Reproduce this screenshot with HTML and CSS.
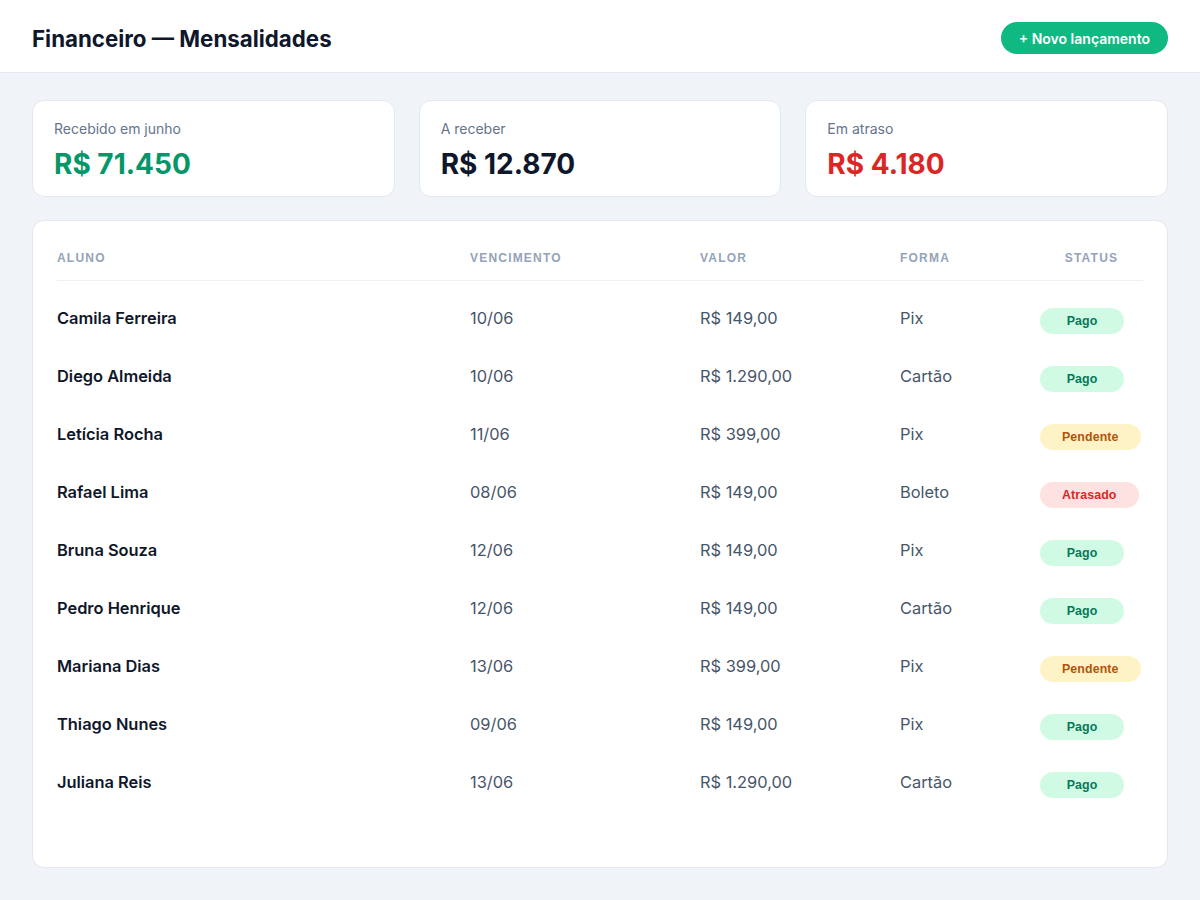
FILE: index.html
```html
<!DOCTYPE html>
<html lang="pt-BR">
<head>
  <meta charset="UTF-8" />
  <meta name="viewport" content="width=device-width, initial-scale=1.0"/>
  <title>Financeiro — Mensalidades</title>
  <link rel="stylesheet" href="styles.css">
</head>
<body>
  <header class="topbar">
    <h1>Financeiro — Mensalidades</h1>
    <button class="btn-new">+ Novo lançamento</button>
  </header>

  <main class="content">
    <section class="summary">
      <div class="card">
        <div class="card-label">Recebido em junho</div>
        <div class="card-value green">R$ 71.450</div>
      </div>
      <div class="card">
        <div class="card-label">A receber</div>
        <div class="card-value">R$ 12.870</div>
      </div>
      <div class="card">
        <div class="card-label">Em atraso</div>
        <div class="card-value red">R$ 4.180</div>
      </div>
    </section>

    <section class="panel">
      <div class="row head">
        <div>Aluno</div>
        <div>Vencimento</div>
        <div>Valor</div>
        <div>Forma</div>
        <div class="center">Status</div>
      </div>
      <div id="rows"></div>
    </section>
  </main>

  <script>
    const pagamentos = [
      ["Camila Ferreira", "10/06", "R$ 149,00", "Pix", "pago"],
      ["Diego Almeida", "10/06", "R$ 1.290,00", "Cartão", "pago"],
      ["Letícia Rocha", "11/06", "R$ 399,00", "Pix", "pendente"],
      ["Rafael Lima", "08/06", "R$ 149,00", "Boleto", "atrasado"],
      ["Bruna Souza", "12/06", "R$ 149,00", "Pix", "pago"],
      ["Pedro Henrique", "12/06", "R$ 149,00", "Cartão", "pago"],
      ["Mariana Dias", "13/06", "R$ 399,00", "Pix", "pendente"],
      ["Thiago Nunes", "09/06", "R$ 149,00", "Pix", "pago"],
      ["Juliana Reis", "13/06", "R$ 1.290,00", "Cartão", "pago"]
    ];

    const rotulos = { pago: "Pago", pendente: "Pendente", atrasado: "Atrasado" };

    document.getElementById("rows").innerHTML = pagamentos.map(([nome, venc, valor, forma, status]) => `
      <div class="row">
        <div class="name">${nome}</div>
        <div>${venc}</div>
        <div>${valor}</div>
        <div>${forma}</div>
        <div><span class="badge ${status}">${rotulos[status]}</span></div>
      </div>`).join("");
  </script>
</body>
</html>
```

FILE: styles.css
```css
:root {
  --bg-color: #f0f4f8;
  --text-color: #0f172a;
  --muted: #64748b;
  --line: #e2e8f0;
  --green: #059669;
  --red: #dc2626;
}

* {
  box-sizing: border-box;
}

body {
  margin: 0;
  height: 100vh;
  display: flex;
  flex-direction: column;
  background-color: var(--bg-color);
  color: var(--text-color);
  font-family: Inter, "Noto Sans", sans-serif;
}

.topbar {
  height: 73px;
  flex-shrink: 0;
  display: flex;
  align-items: center;
  justify-content: space-between;
  padding: 4px 32px 0;
  background: #ffffff;
  border-bottom: 1px solid var(--line);
}

.topbar h1 {
  margin: 0;
  font-size: 22.3px;
  font-weight: 700;
}

.btn-new {
  height: 32px;
  padding: 0 18px;
  border: none;
  border-radius: 16px;
  background-color: #10b981;
  color: #ffffff;
  font-family: Inter, sans-serif;
  font-size: 14px;
  font-weight: 600;
  cursor: pointer;
}

.content {
  flex: 1;
  display: flex;
  flex-direction: column;
  gap: 23px;
  padding: 27px 32px 32px;
}

.summary {
  display: grid;
  grid-template-columns: repeat(3, 1fr);
  gap: 24px;
}

.card {
  height: 97px;
  padding: 18px 21px 15px;
  background: #ffffff;
  border: 1px solid var(--line);
  border-radius: 12px;
}

.card-label {
  font-size: 14px;
  line-height: 20px;
  color: var(--muted);
}

.card-value {
  margin-top: 8px;
  font-size: 28px;
  line-height: 34px;
  font-weight: 700;
}

.card-value.green {
  color: var(--green);
}

.card-value.red {
  color: var(--red);
}

.panel {
  flex: 1;
  padding: 24px;
  background: #ffffff;
  border: 1px solid var(--line);
  border-radius: 12px;
}

.row {
  display: grid;
  grid-template-columns: 413px 230px 200px 140px 1fr;
  align-items: center;
  height: 58px;
  font-size: 16.4px;
  color: #475569;
}

.row.head {
  height: 36px;
  align-items: start;
  padding-top: 1px;
  line-height: 24px;
  margin-bottom: 8px;
  border-bottom: 1px solid #edf1f5;
  font-family: "Liberation Sans", Arial, sans-serif;
  font-size: 12px;
  font-weight: 700;
  letter-spacing: 0.1em;
  text-transform: uppercase;
  color: #94a3b8;
}

.center {
  text-align: center;
}

.name {
  font-weight: 600;
  color: var(--text-color);
}

.badge {
  display: inline-block;
  min-width: 84px;
  height: 26px;
  margin-top: 6px;
  line-height: 26px;
  padding: 0 22px;
  border-radius: 13px;
  text-align: center;
  font-family: "Liberation Sans", Arial, sans-serif;
  font-size: 12.4px;
  font-weight: 700;
  letter-spacing: 0.1px;
}

.badge.pago {
  background-color: #d1fae5;
  color: #047857;
}

.badge.pendente {
  background-color: #fef3c7;
  color: #b45309;
}

.badge.atrasado {
  background-color: #fee2e2;
  color: #dc2626;
}
```
